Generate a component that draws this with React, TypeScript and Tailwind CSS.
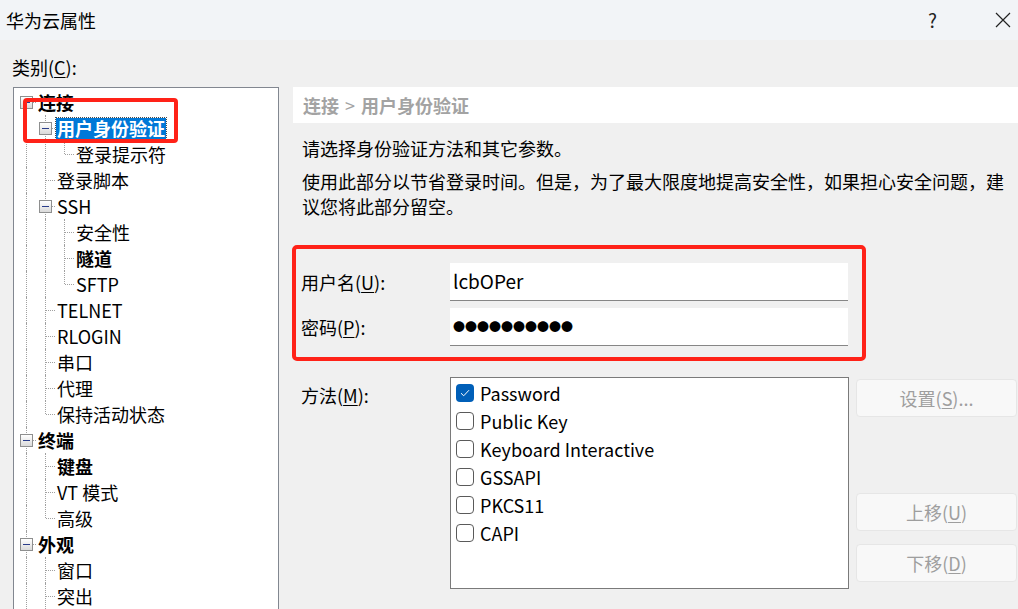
import React from 'react';

type N = { label: string; bold?: boolean; selected?: boolean; children?: N[] };

const tree: N[] = [
  {
    label: '连接',
    bold: true,
    children: [
      { label: '用户身份验证', bold: true, selected: true, children: [{ label: '登录提示符' }] },
      { label: '登录脚本' },
      { label: 'SSH', children: [{ label: '安全性' }, { label: '隧道', bold: true }, { label: 'SFTP' }] },
      { label: 'TELNET' },
      { label: 'RLOGIN' },
      { label: '串口' },
      { label: '代理' },
      { label: '保持活动状态' },
    ],
  },
  { label: '终端', bold: true, children: [{ label: '键盘', bold: true }, { label: 'VT 模式' }, { label: '高级' }] },
  { label: '外观', bold: true, children: [{ label: '窗口' }, { label: '突出' }, { label: '颜色' }] },
  { label: '日志文件', bold: true },
];

type Row = { node: N; depth: number; guides: boolean[]; isLast: boolean; isFirst: boolean };

function flatten(nodes: N[], depth: number, guides: boolean[], out: Row[]): Row[] {
  nodes.forEach((n, i) => {
    const isLast = i === nodes.length - 1;
    out.push({ node: n, depth, guides, isLast, isFirst: depth === 0 && i === 0 });
    if (n.children) flatten(n.children, depth + 1, [...guides, !isLast], out);
  });
  return out;
}

function TreeRow({ r }: { r: Row }) {
  const has = !!r.node.children;
  return (
    <div className="flex h-[26px] items-center">
      {r.guides.map((g, i) => (
        <div key={i} className="relative h-full w-[19px] shrink-0">
          {g && <div className="absolute left-[9px] top-0 h-full border-l border-dotted border-[#a0a0a0]" />}
        </div>
      ))}
      <div className="relative h-full w-[19px] shrink-0">
        <div
          className={`absolute left-[9px] border-l border-dotted border-[#a0a0a0] ${r.isFirst ? 'top-[13px]' : 'top-0'} ${r.isLast ? 'h-[13px]' : 'bottom-0'}`}
        />
        <div className="absolute left-[10px] right-0 top-[13px] border-t border-dotted border-[#a0a0a0]" />
        {has && (
          <div className="absolute left-[3px] top-[7px] flex h-[13px] w-[13px] items-center justify-center border border-[#8e8f8f] bg-gradient-to-b from-white to-[#dadada]">
            <div className="h-[1px] w-[7px] bg-[#2a3d8a]" />
          </div>
        )}
      </div>
      <span
        className={`ml-[1px] h-[21px] whitespace-nowrap px-[1px] text-[18px] leading-[21px] ${r.node.bold ? 'font-bold' : ''} ${r.node.selected ? 'bg-[#0078d7] text-white outline-1 outline-dotted outline-[#4a4a4a]' : 'text-black'}`}
      >
        {r.node.label}
      </span>
    </div>
  );
}

function Check({ checked, label }: { checked?: boolean; label: string }) {
  return (
    <div className="flex h-[28px] items-center gap-[6px]">
      {checked ? (
        <div className="flex h-[18px] w-[18px] items-center justify-center rounded-[4px] bg-[#005fb8]">
          <svg width="10" height="8" viewBox="0 0 10 8" fill="none">
            <path d="M1 4.2 L3.7 6.8 L9 1.2" stroke="white" strokeWidth="1" />
          </svg>
        </div>
      ) : (
        <div className="h-[18px] w-[18px] rounded-[4px] border border-[#5a5a5a] bg-white" />
      )}
      <span className="text-[18px] leading-[28px] text-black">{label}</span>
    </div>
  );
}

function Btn({ children }: { children: React.ReactNode }) {
  return (
    <div className="flex h-[38px] w-[161px] items-center justify-center rounded-[4px] border border-[#e6e6e6] bg-[#f8f8f8] text-[18px] text-[#9e9e9e]">
      {children}
    </div>
  );
}

export default function App() {
  const rows = flatten(tree, 0, [], []);
  return (
    <div className="h-[609px] w-[1018px] overflow-hidden bg-[#f0f0f0] font-[Noto_Sans_CJK_SC,sans-serif] text-black">
      {/* title bar */}
      <div className="flex h-[40px] items-center bg-[#f2f4f7] pl-[6px]">
        <span className="text-[18px] leading-[24px]">华为云属性</span>
        <div className="flex-1" />
        <span className="mr-[58px] text-[19px] leading-[24px] text-[#222]">?</span>
        <svg width="16" height="16" viewBox="0 0 16 16" className="mr-[7px]">
          <path d="M1 1 L15 15 M15 1 L1 15" stroke="#222" strokeWidth="1.2" />
        </svg>
      </div>

      <div className="flex h-[569px]">
        {/* left column */}
        <div className="flex w-[279px] flex-col pl-[12px]">
          <div className="mb-[7px] pt-[14px] text-[18px] leading-[26px]">
            类别(<span className="underline underline-offset-2">C</span>):
          </div>
          <div className="relative ml-[1px] flex-1 overflow-hidden border border-b-0 border-[#828790] bg-white pl-[3px] pt-[1px]">
            {rows.map((r, i) => (
              <TreeRow key={i} r={r} />
            ))}
            <div className="absolute left-[9px] top-[10px] h-[45px] w-[155px] rounded-[4px] border-[4px] border-[#ff2218]" />
          </div>
        </div>

        {/* right column */}
        <div className="ml-[14px] flex w-[725px] flex-col pt-[47px]">
          <div className="flex h-[36px] items-center bg-white pl-[10px] text-[18px] font-bold text-[#a3a3a3]">
            连接 <span className="mx-[6px] font-normal">&gt;</span> 用户身份验证
          </div>
          <div className="mt-[12px] pl-[9px] text-[18px] leading-[26px]">请选择身份验证方法和其它参数。</div>
          <div className="mt-[8px] whitespace-nowrap pl-[9px] text-[18px] leading-[25px]">
            使用此部分以节省登录时间。但是，为了最大限度地提高安全性，如果担心安全问题，建
            <br />
            议您将此部分留空。
          </div>

          {/* credentials */}
          <div className="relative mt-[44px] flex flex-col gap-[7px] pl-[8px]">
            <div className="flex items-center">
              <div className="w-[149px] text-[18px]">
                用户名(<span className="underline underline-offset-2">U</span>):
              </div>
              <div className="flex h-[38px] w-[398px] items-center border-b border-[#868686] bg-white pl-[3px] text-[19px]">
                lcbOPer
              </div>
            </div>
            <div className="flex items-center">
              <div className="w-[149px] text-[18px]">
                密码(<span className="underline underline-offset-2">P</span>):
              </div>
              <div className="flex h-[38px] w-[398px] items-center border-b border-[#868686] bg-white pl-[3px] text-[12px] leading-[12px]">
                ●●●●●●●●●●
              </div>
            </div>
            <div className="absolute left-[-1px] top-[-18px] h-[116px] w-[574px] rounded-[5px] border-[4px] border-[#ff2218]" />
          </div>

          {/* methods */}
          <div className="mt-[31px] flex pl-[8px]">
            <div className="w-[149px] pt-[5px] text-[18px] leading-[26px]">
              方法(<span className="underline underline-offset-2">M</span>):
            </div>
            <div className="h-[212px] w-[399px] border border-[#7a7a7a] bg-white pl-[5px] pt-[1px]">
              <Check checked label="Password" />
              <Check label="Public Key" />
              <Check label="Keyboard Interactive" />
              <Check label="GSSAPI" />
              <Check label="PKCS11" />
              <Check label="CAPI" />
            </div>
            <div className="ml-[7px] mt-[2px] flex flex-col">
              <Btn>
                设置(<span className="underline underline-offset-2">S</span>)...
              </Btn>
              <div className="h-[76px]" />
              <Btn>
                上移(<span className="underline underline-offset-2">U</span>)
              </Btn>
              <div className="h-[13px]" />
              <Btn>
                下移(<span className="underline underline-offset-2">D</span>)
              </Btn>
            </div>
          </div>
        </div>
      </div>
    </div>
  );
}
